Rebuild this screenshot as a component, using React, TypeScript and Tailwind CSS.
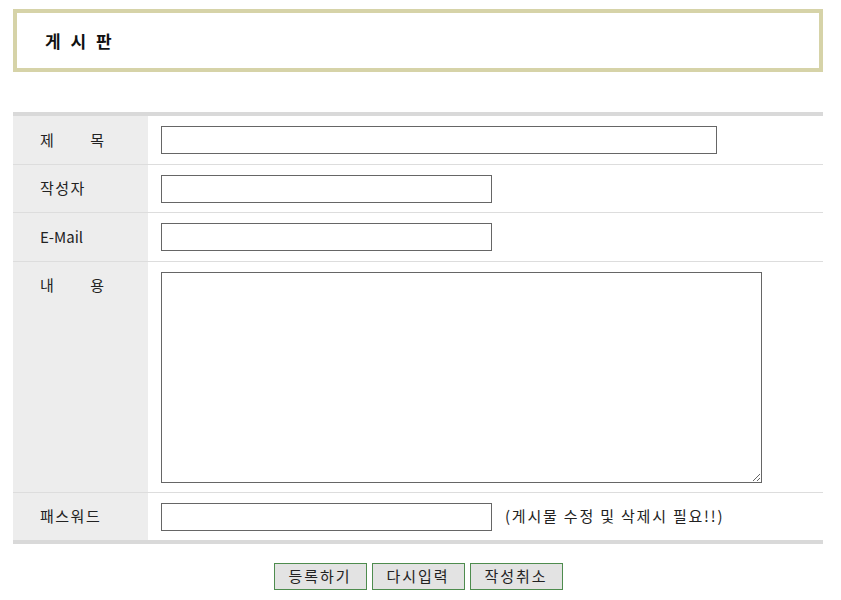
import React from "react";

const font = { fontFamily: '"Noto Sans CJK KR", "Noto Sans", sans-serif' };

function Label({ a, b, text, plain }: { a?: string; b?: string; text?: string; plain?: boolean }) {
  if (text)
    return (
      <span className={plain ? "text-[15px] text-[#222]" : "text-[15px] tracking-[1.5px] text-[#222]"}>{text}</span>
    );
  return (
    <span className="flex w-[64px] justify-between text-[15px] text-[#222]">
      <span>{a}</span>
      <span>{b}</span>
    </span>
  );
}

export default function App() {
  const inputCls = "h-[28px] border border-[#666] bg-white outline-none";
  return (
    <div className="w-[841px] h-[600px] bg-white pl-[13px] pt-[9px]" style={font}>
      <div className="w-[810px]">
        <div className="flex h-[63px] items-center border-4 border-[#d6d3a8] pl-[28px]">
          <h1 className="text-[17px] font-semibold text-[#111] tracking-[3px]">게 시 판</h1>
        </div>

        <div className="mt-[40px] border-y-4 border-[#d9d9d9]">
          <div className="flex h-[49px] border-b border-[#dddddd]">
            <div className="flex w-[135px] items-center bg-[#ededed] pl-[27px]">
              <Label a="제" b="목" />
            </div>
            <div className="flex flex-1 items-center pl-[13px]">
              <input className={`${inputCls} w-[556px]`} />
            </div>
          </div>
          <div className="flex h-[48px] border-b border-[#dddddd]">
            <div className="flex w-[135px] items-center bg-[#ededed] pl-[27px]">
              <Label text="작성자" />
            </div>
            <div className="flex flex-1 items-center pl-[13px]">
              <input className={`${inputCls} w-[331px]`} />
            </div>
          </div>
          <div className="flex h-[49px] border-b border-[#dddddd]">
            <div className="flex w-[135px] items-center bg-[#ededed] pl-[27px]">
              <Label text="E-Mail" plain />
            </div>
            <div className="flex flex-1 items-center pl-[13px]">
              <input className={`${inputCls} w-[331px]`} />
            </div>
          </div>
          <div className="flex h-[231px] border-b border-[#dddddd]">
            <div className="flex w-[135px] items-start bg-[#ededed] pl-[27px] pt-[12px]">
              <Label a="내" b="용" />
            </div>
            <div className="flex flex-1 items-center pl-[13px]">
              <textarea className="h-[211px] w-[601px] border border-[#666] bg-white outline-none" />
            </div>
          </div>
          <div className="flex h-[47px]">
            <div className="flex w-[135px] items-center bg-[#ededed] pl-[27px]">
              <Label text="패스워드" />
            </div>
            <div className="flex flex-1 items-center pl-[13px]">
              <input className={`${inputCls} w-[331px]`} />
              <span className="ml-[13px] text-[15px] tracking-[1.8px] text-[#222]">(게시물 수정 및 삭제시 필요!!)</span>
            </div>
          </div>
        </div>

        <div className="mt-[19px] flex justify-center gap-[5px]">
          {["등록하기", "다시입력", "작성취소"].map((t) => (
            <button
              key={t}
              className="flex h-[27px] w-[93px] items-center justify-center border border-[#4e8c4e] bg-[#e3e3e3] text-[15px] tracking-[2px] text-[#222]"
            >
              {t}
            </button>
          ))}
        </div>
      </div>
    </div>
  );
}
